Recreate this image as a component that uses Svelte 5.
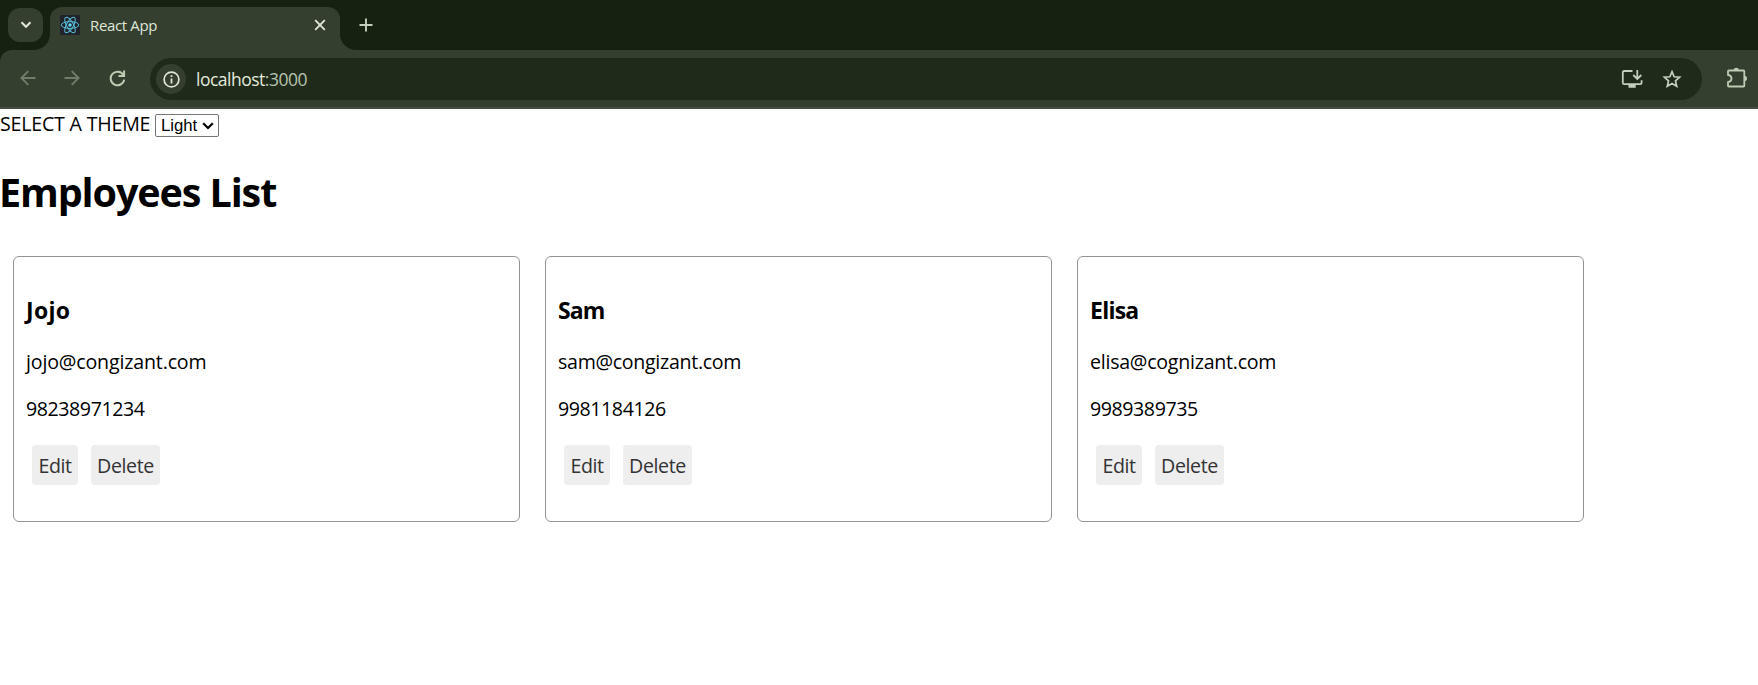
<script>
  const employees = [
    { name: 'Jojo', email: 'jojo@congizant.com', phone: '98238971234', nameGap: 0.3, emailGap: -0.16 },
    { name: 'Sam', email: 'sam@congizant.com', phone: '9981184126', nameGap: -0.85, emailGap: -0.3 },
    { name: 'Elisa', email: 'elisa@cognizant.com', phone: '9989389735', nameGap: -0.75, emailGap: -0.25 }
  ];
</script>

<div class="browser">
  <div class="tabstrip">
    <div class="search-tabs">
      <svg width="12" height="8" viewBox="0 0 12 8"><path d="M1.5 1.3 6 5.8l4.500-4.500" fill="none" stroke="#dfe6d8" stroke-width="2.100" /></svg>
    </div>
    <div class="tab">
      <svg class="curve" width="16" height="16" viewBox="0 0 16 16"><path d="M16 0v16H0A16 16 0 0 0 16 0" fill="#343f2f" /></svg>
      <div class="tab-body">
        <svg width="20" height="20" viewBox="0 0 20 20">
          <rect width="20" height="20" rx="1.500" fill="#20232a" />
          <g fill="none" stroke="#58bdd8" stroke-width="1">
            <ellipse cx="10" cy="10" rx="8.800" ry="3.400" />
            <ellipse cx="10" cy="10" rx="8.800" ry="3.400" transform="rotate(60 10 10)" />
            <ellipse cx="10" cy="10" rx="8.800" ry="3.400" transform="rotate(120 10 10)" />
          </g>
          <circle cx="10" cy="10" r="1.700" fill="#61dafb" />
        </svg>
        <span class="tab-title">React App</span>
        <svg width="12" height="12" viewBox="0 0 12 12"><path d="m1.200 1.200 9.600 9.600m0-9.600-9.600 9.600" stroke="#dfe6d8" stroke-width="1.900" /></svg>
      </div>
      <svg class="curve" width="16" height="16" viewBox="0 0 16 16"><path d="M0 0v16h16A16 16 0 0 1 0 0" fill="#343f2f" /></svg>
    </div>
    <svg class="new-tab" width="14" height="14" viewBox="0 0 14 14"><path d="M7 .5v13M.5 7h13" stroke="#c3cfba" stroke-width="1.900" /></svg>
  </div>

  <div class="toolbar">
    <svg width="16" height="16" viewBox="0 0 16 16"><path d="M15.500 8H1.700M8.300 1.100 1.400 8l6.900 6.900" fill="none" stroke="#707d69" stroke-width="1.900" /></svg>
    <svg class="forward" width="16" height="16" viewBox="0 0 16 16"><path d="M.5 8h13.800M7.700 1.100 14.600 8l-6.900 6.900" fill="none" stroke="#707d69" stroke-width="1.900" /></svg>
    <svg class="reload" width="17" height="17" viewBox="0 0 17 17"><path d="M15.200 9.600A6.800 6.800 0 1 1 14.300 4.900M15.100.5v5.600H9.500" fill="none" stroke="#bccbb2" stroke-width="2" /></svg>
    <div class="address">
      <div class="info">
        <svg width="17" height="17" viewBox="0 0 17 17"><circle cx="8.500" cy="8.500" r="7.400" fill="none" stroke="#dfe6d8" stroke-width="1.700" /><path d="M8.500 4.200v1.900M8.500 7.500v5" stroke="#dfe6d8" stroke-width="1.800" /></svg>
      </div>
      <span class="url">localhost<span>:3000</span></span>
      <svg width="22" height="20" viewBox="0 0 22 20"><path d="M11.500 2H3.200Q1.800 2 1.800 3.400v10.400q0 1.400 1.400 1.400h16q1.400 0 1.400-1.400v-2.600" fill="none" stroke="#c5cfbf" stroke-width="1.800" /><path d="M7.500 15.200h7.200v3.500H7.500z" fill="#c5cfbf" /><path d="M16.300 1v9m-4-4 4 4 4-4" fill="none" stroke="#c5cfbf" stroke-width="1.800" /></svg>
      <svg class="star" width="20" height="20" viewBox="0 0 20 20"><path d="m10 2.700 2.150 5.080 5.500.480-4.170 3.620 1.250 5.380L10 14.400l-4.730 2.860 1.250-5.380-4.170-3.620 5.500-.480z" fill="none" stroke="#c5cfbf" stroke-width="1.700" /></svg>
    </div>
    <svg class="puzzle" width="22" height="22" viewBox="0 0 22 22"><path d="M2.800 3.500h14.700q.8 0 .8.800v14.400q0 .8-.8.800H2.800q-.8 0-.8-.8v-3.600c4.700-.9 4.700-6.300 0-7.200V4.300q0-.8.8-.8z" fill="none" stroke="#bccbb2" stroke-width="1.800" /><path d="M7.500 3.500a2.700 2.700 0 0 1 5.400 0zM18.300 8.800a2.700 2.700 0 0 1 0 5.400z" fill="#bccbb2" /></svg>
  </div>
</div>

<main>
  <div class="theme">
    <label for="theme">SELECT A THEME</label>
    <div class="select" id="theme">
      <span>Light</span>
      <svg width="12" height="8" viewBox="0 0 12 8"><path d="m1.200 1.300 4.800 4.700 4.800-4.700" fill="none" stroke="#000" stroke-width="2.200" /></svg>
    </div>
  </div>
  <h1>Employees List</h1>
  <div class="cards">
    {#each employees as employee}
      <article>
        <h3 style:letter-spacing="{employee.nameGap}px">{employee.name}</h3>
        <p style:letter-spacing="{employee.emailGap}px">{employee.email}</p>
        <p class="phone">{employee.phone}</p>
        <div class="actions">
          <button class="edit">Edit</button>
          <button class="delete">Delete</button>
        </div>
      </article>
    {/each}
  </div>
</main>

<style>
  :global(body) { margin: 0; background: #fff; overflow: hidden; }
  svg { display: block; flex: none; }
  .browser, main { font-family: "Open Sans", "Noto Sans", sans-serif; }
  .browser { height: 109px; background: #172112; }
  .tabstrip { display: flex; height: 50px; }
  .search-tabs { display: flex; align-items: center; justify-content: center; width: 35px; height: 34px; margin: 8px 0 0 8px; border-radius: 12px; background: #343f2f; }
  .tab { display: flex; align-items: flex-end; margin-left: -9px; }
  .tab-body { box-sizing: border-box; display: flex; align-items: center; width: 290px; height: 43px; padding: 0 14px 8px 10px; background: #343f2f; border-radius: 12px 12px 0 0; }
  .tab-title { flex: 1; margin-left: 10px; color: #dfe6d8; font-size: 15px; line-height: 20px; letter-spacing: -0.35px; }
  .new-tab { margin: 18px 0 0 3px; }
  .toolbar { box-sizing: border-box; display: flex; align-items: center; height: 59px; padding: 0 0 1px 20px; background: #343f2f; border-bottom: 2px solid #454d41; border-radius: 12px 0 0 0; overflow: hidden; }
  .forward { margin-left: 28px; }
  .reload { margin-left: 29px; }
  .address { box-sizing: border-box; display: flex; align-items: center; width: 1552px; height: 42px; margin: 2px 0 0 24px; padding: 0 20px 0 6px; border-radius: 21px; background: #1f2a1a; flex: none; }
  .info { display: flex; align-items: center; justify-content: center; width: 30px; height: 30px; border-radius: 50%; background: #343f2f; }
  .url { flex: 1; margin-left: 10px; color: #e3e9dc; font-size: 17.500px; line-height: 24px; letter-spacing: -0.5px; }
  .url span { color: #b8c3b0; }
  .star { margin-left: 19px; }
  .puzzle { margin-left: 24px; }
  main { color: #000; font-size: 19.600px; }
  .theme { display: flex; align-items: flex-start; height: 33px; padding-top: 1px; }
  label { width: 155px; line-height: 28px; letter-spacing: -0.2px; white-space: nowrap; }
  .select { box-sizing: border-box; display: flex; align-items: center; justify-content: space-between; width: 64px; height: 23px; margin-top: 4px; padding: 0 4px 0 5px; border: 1px solid #767676; border-radius: 2px; font: 16.700px "Liberation Sans", sans-serif; }
  h1 { margin: 21px 0 0 -1px; font-size: 39.500px; line-height: 56px; font-weight: 700; letter-spacing: -1.1px; }
  .cards { display: grid; grid-template-columns: repeat(3, 507px); gap: 25px; margin: 36px 0 0 13px; }
  article { box-sizing: border-box; height: 266px; padding: 37px 12px 0; border: 1px solid #939393; border-radius: 6px; }
  h3 { margin: 0; font-size: 23px; line-height: 32px; }
  p { margin: 22px 0 0; line-height: 28px; }
  .phone { margin-top: 19px; letter-spacing: -0.43px; }
  .actions { display: flex; gap: 13px; margin: 22px 0 0 6px; }
  button { height: 40px; padding: 0; border: 0; border-radius: 4px; background: #eee; color: #333; font: 19.600px "Open Sans", sans-serif; }
  .edit { width: 46px; letter-spacing: -0.4px; }
  .delete { width: 69px; letter-spacing: -0.4px; }
</style>
